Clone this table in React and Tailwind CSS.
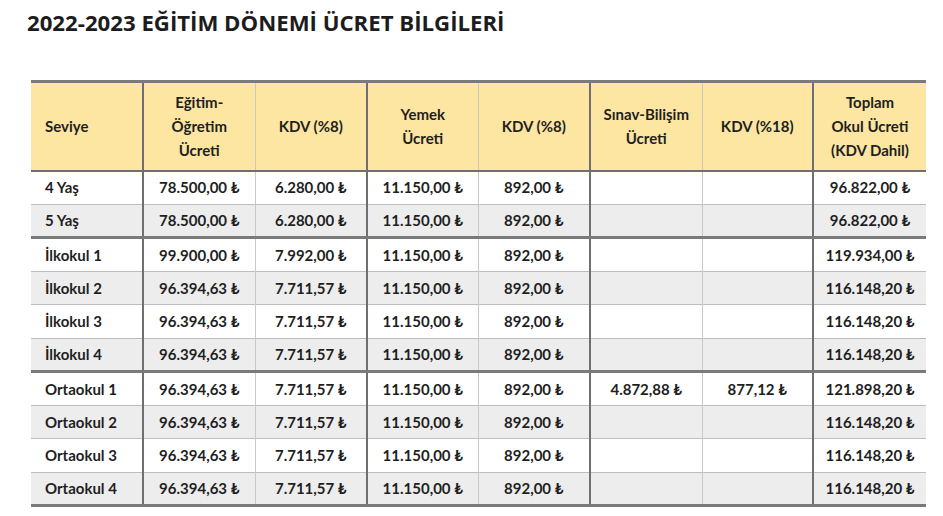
const headers = [
  ["Seviye"],
  ["Eğitim-", "Öğretim", "Ücreti"],
  ["KDV (%8)"],
  ["Yemek", "Ücreti"],
  ["KDV (%8)"],
  ["Sınav-Bilişim", "Ücreti"],
  ["KDV (%18)"],
  ["Toplam", "Okul Ücreti", "(KDV Dahil)"],
];

const widths = ["w-[112px]", "w-[112px]", "w-[112px]", "w-[111px]", "w-[112px]", "w-[112px]", "w-[111px]", "w-[113px]"];

// vertical divider before each column
const leftBorders = [
  "",
  "border-l-2 border-l-[#6f6f6f]",
  "border-l border-l-[#c9c9c9]",
  "border-l-2 border-l-[#6f6f6f]",
  "border-l border-l-[#c9c9c9]",
  "border-l-2 border-l-[#6f6f6f]",
  "border-l border-l-[#c9c9c9]",
  "border-l-2 border-l-[#6f6f6f]",
];

const ilk = ["96.394,63 ₺", "7.711,57 ₺", "11.150,00 ₺", "892,00 ₺", "", "", "116.148,20 ₺"];

const rows = [
  { cells: ["4 Yaş", "78.500,00 ₺", "6.280,00 ₺", "11.150,00 ₺", "892,00 ₺", "", "", "96.822,00 ₺"] },
  { cells: ["5 Yaş", "78.500,00 ₺", "6.280,00 ₺", "11.150,00 ₺", "892,00 ₺", "", "", "96.822,00 ₺"], thick: true },
  { cells: ["İlkokul 1", "99.900,00 ₺", "7.992,00 ₺", "11.150,00 ₺", "892,00 ₺", "", "", "119.934,00 ₺"] },
  { cells: ["İlkokul 2", ...ilk] },
  { cells: ["İlkokul 3", ...ilk] },
  { cells: ["İlkokul 4", ...ilk], thick: true },
  { cells: ["Ortaokul 1", "96.394,63 ₺", "7.711,57 ₺", "11.150,00 ₺", "892,00 ₺", "4.872,88 ₺", "877,12 ₺", "121.898,20 ₺"] },
  { cells: ["Ortaokul 2", ...ilk] },
  { cells: ["Ortaokul 3", ...ilk] },
  { cells: ["Ortaokul 4", ...ilk], thick: true },
];

export default function App() {
  return (
    <div className="w-[943px] h-[516px] bg-white overflow-hidden">
      <h1 className="pl-[27px] pt-[8px] text-[22.2px] leading-[30px] font-bold text-[#1c1c1c] font-['Open_Sans',sans-serif]">
        2022-2023 EĞİTİM DÖNEMİ ÜCRET BİLGİLERİ
      </h1>

      <table className="ml-[31px] mt-[42px] border-collapse font-['Lato','DejaVu_Sans',sans-serif] text-[15px] font-bold text-[#1f1f1f]">
        <thead>
          <tr className="bg-[#fde5a2] border-t-[3px] border-t-[#7a7a7a] border-b-[2px] border-b-[#6f6f6f]">
            {headers.map((h, i) => (
              <th
                key={i}
                className={`h-[89px] p-0 font-bold leading-[24px] ${widths[i]} ${leftBorders[i]} ${
                  i === 0 ? "text-left pl-[14px]" : "text-center"
                }`}
              >
                {h.map((line, j) => (
                  <div key={j}>{line}</div>
                ))}
              </th>
            ))}
          </tr>
        </thead>
        <tbody>
          {rows.map((row, r) => (
            <tr
              key={r}
              className={`${r % 2 === 1 ? "bg-[#ededed]" : "bg-white"} ${
                row.thick ? "border-b-[3px] border-b-[#7a7a7a]" : "border-b border-b-[#bdbdbd]"
              }`}
            >
              {row.cells.map((c, i) => (
                <td
                  key={i}
                  className={`h-[33.5px] p-0 ${widths[i]} ${leftBorders[i]} ${
                    i === 0 ? "text-left pl-[14px]" : "text-center"
                  }`}
                >
                  {c}
                </td>
              ))}
            </tr>
          ))}
        </tbody>
      </table>
    </div>
  );
}
